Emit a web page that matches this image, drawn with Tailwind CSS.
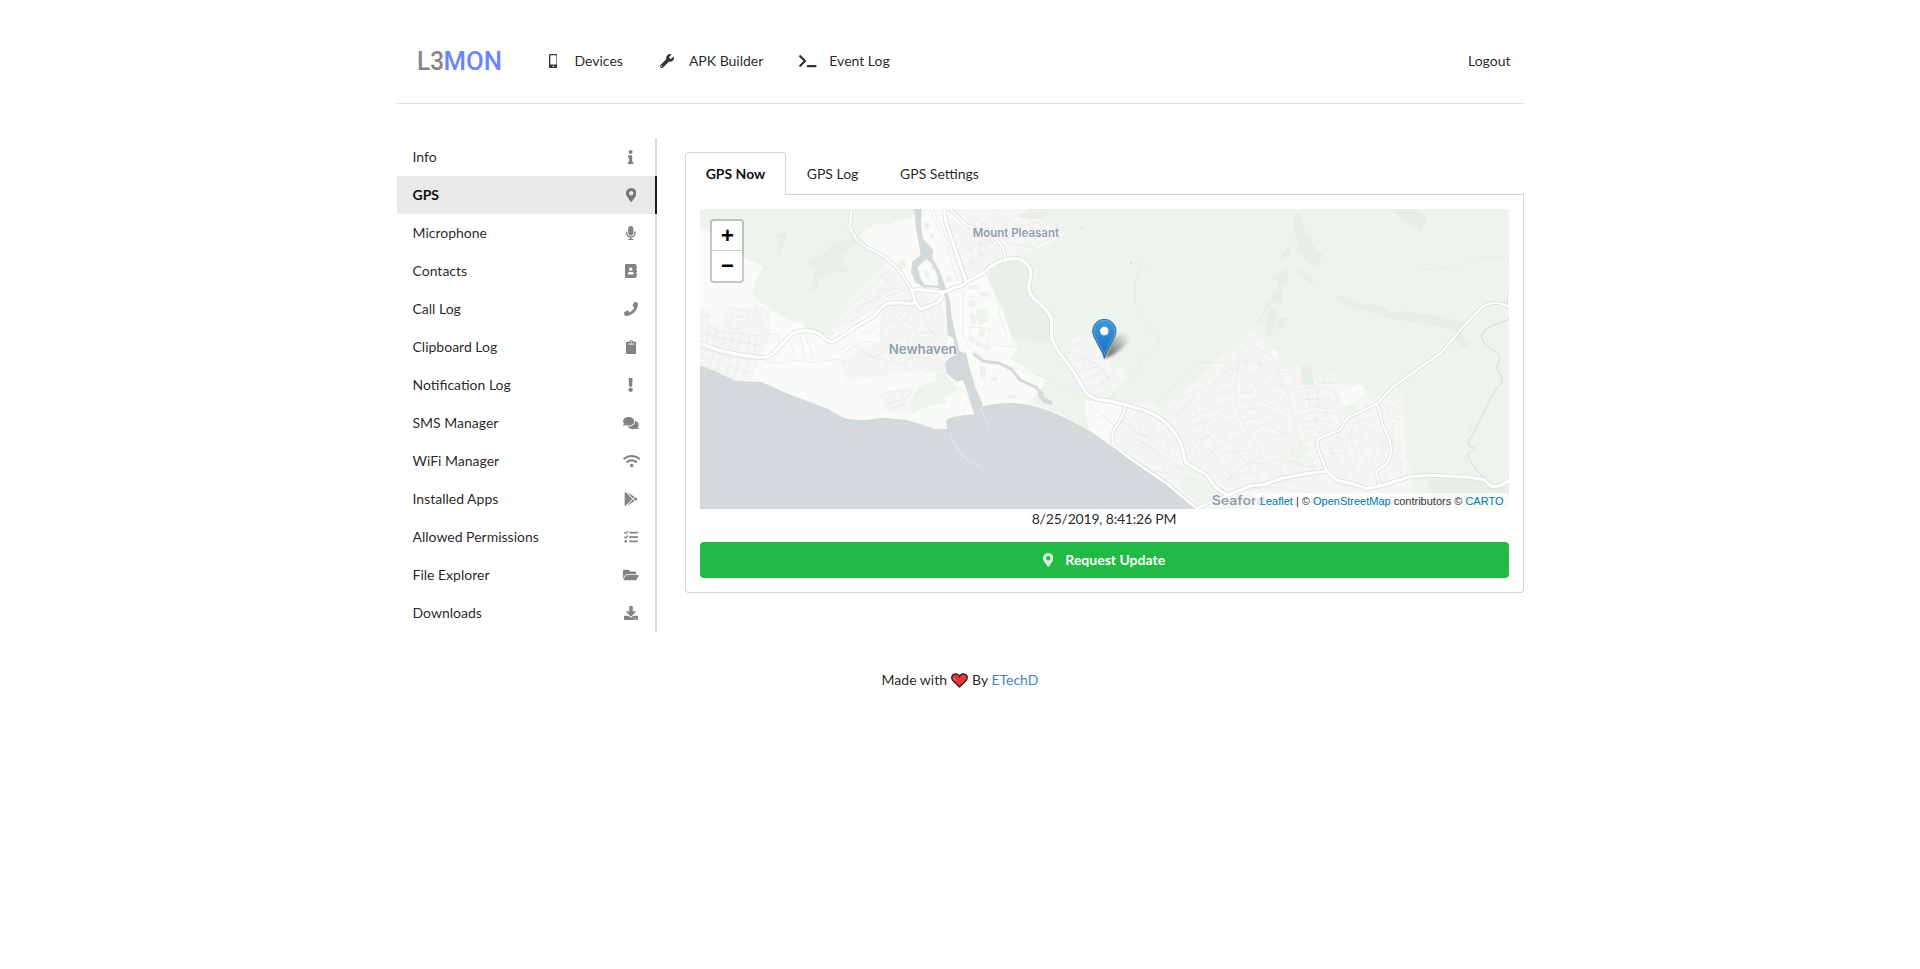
<!DOCTYPE html>
<html lang="en">
<head>
<meta charset="utf-8">
<title>L3MON</title>
<script src="https://cdn.jsdelivr.net/npm/@tailwindcss/browser@4"></script>
</head>
<body class="bg-white font-[Lato,sans-serif] text-sm leading-[18px] text-black/87">
<div class="mx-auto w-[1127px]">
  <header class="mt-[19px] flex h-[85px] items-center border-b border-[#dedede]">
    <svg class="ml-4 h-9 w-[94px]" viewBox="-4 -6 94 36" font-family="Roboto, sans-serif" font-size="25" font-weight="500"><text x="0" y="21" fill="#858585" textLength="27" lengthAdjust="spacingAndGlyphs">L3</text><text x="26.500" y="21" fill="#6c86fa" textLength="58.500" lengthAdjust="spacingAndGlyphs">MON</text></svg>
    <a class="ml-[38px] flex items-center"><span class="flex w-[17px] justify-center"><svg class="h-3.5 fill-[#333]" viewBox="0 0 320 512"><path d="M272 0H48C21.5 0 0 21.5 0 48v416c0 26.500 21.500 48 48 48h224c26.500 0 48-21.500 48-48V48c0-26.500-21.500-48-48-48zM160 480c-17.700 0-32-14.300-32-32s14.300-32 32-32 32 14.300 32 32-14.300 32-32 32zm112-108c0 6.600-5.400 12-12 12H60c-6.600 0-12-5.400-12-12V60c0-6.600 5.400-12 12-12h200c6.600 0 12 5.400 12 12v312z"/></svg></span><span class="ml-[13px]">Devices</span></a>
    <a class="ml-9 flex items-center"><span class="flex w-[17px] justify-center"><svg class="h-3.5 fill-[#333]" viewBox="0 0 512 512"><path d="M507.730 109.100c-2.240-9.030-13.540-12.090-20.120-5.510l-74.360 74.360-67.880-11.310-11.310-67.880 74.360-74.360c6.620-6.620 3.430-17.900-5.660-20.160-47.380-11.740-99.550.91-136.580 37.930-39.640 39.640-50.550 97.100-34.050 147.200L18.740 402.760c-24.990 24.990-24.990 65.510 0 90.500 24.990 24.990 65.510 24.990 90.500 0l213.210-213.210c50.120 16.710 107.470 5.680 147.370-34.220 37.070-37.070 49.700-89.320 37.910-136.730zM64 472c-13.250 0-24-10.750-24-24 0-13.260 10.750-24 24-24s24 10.740 24 24c0 13.250-10.750 24-24 24z"/></svg></span><span class="ml-[13px]">APK Builder</span></a>
    <a class="ml-9 flex items-center"><span class="flex w-[17px] justify-center"><svg class="h-3.5 shrink-0 fill-[#333]" viewBox="0 0 640 512"><path d="M257.981 272.971L63.638 467.314c-9.373 9.373-24.569 9.373-33.941 0L7.029 444.647c-9.357-9.357-9.375-24.522-.04-33.901L161.011 256 6.990 101.255c-9.335-9.379-9.317-24.544.04-33.901l22.667-22.667c9.373-9.373 24.569-9.373 33.941 0L257.981 239.030c9.373 9.372 9.373 24.568 0 33.941zM640 456v-32c0-13.255-10.745-24-24-24H312c-13.255 0-24 10.745-24 24v32c0 13.255 10.745 24 24 24h304c13.255 0 24-10.745 24-24z"/></svg></span><span class="ml-[13px]">Event Log</span></a>
    <a class="mr-[13px] ml-auto">Logout</a>
  </header>

  <div class="flex pt-[34px]">
    <nav class="w-[260px] shrink-0">
      <a class="flex h-[38px] items-center justify-between border-r-2 border-[#dededf] pr-[15px] pl-4">Info<span class="flex w-[17px] justify-center"><svg class="h-3.5 fill-[#838383]" viewBox="0 0 192 512"><path d="M20 424.229h20V279.771H20c-11.046 0-20-8.954-20-20V212c0-11.046 8.954-20 20-20h112c11.046 0 20 8.954 20 20v212.229h20c11.046 0 20 8.954 20 20V492c0 11.046-8.954 20-20 20H20c-11.046 0-20-8.954-20-20v-47.771c0-11.046 8.954-20 20-20zM96 0C56.235 0 24 32.235 24 72s32.235 72 72 72 72-32.235 72-72S135.764 0 96 0z"/></svg></span></a>
      <a class="flex h-[38px] items-center justify-between border-r-2 border-[#1b1c1d] bg-[#e9e9e9] pr-[15px] pl-4 font-bold text-black/95">GPS<span class="flex w-[17px] justify-center"><svg class="h-3.5 fill-[#777777]" viewBox="0 0 384 512"><path d="M172.268 501.670C26.970 291.031 0 269.413 0 192 0 85.961 85.961 0 192 0s192 85.961 192 192c0 77.413-26.970 99.031-172.268 309.670-9.535 13.774-29.930 13.773-39.464 0zM192 272c44.183 0 80-35.817 80-80s-35.817-80-80-80-80 35.817-80 80 35.817 80 80 80z"/></svg></span></a>
      <a class="flex h-[38px] items-center justify-between border-r-2 border-[#dededf] pr-[15px] pl-4">Microphone<span class="flex w-[17px] justify-center"><svg class="h-3.5 fill-[#838383]" viewBox="0 0 352 512"><path d="M176 352c53.020 0 96-42.980 96-96V96c0-53.020-42.980-96-96-96S80 42.980 80 96v160c0 53.020 42.980 96 96 96zm160-160h-16c-8.840 0-16 7.160-16 16v48c0 74.800-64.490 134.820-140.790 127.380C96.710 376.890 48 317.110 48 250.300V208c0-8.840-7.160-16-16-16H16c-8.840 0-16 7.160-16 16v40.160c0 89.640 63.970 169.550 152 181.690V464H96c-8.840 0-16 7.160-16 16v16c0 8.840 7.160 16 16 16h160c8.840 0 16-7.160 16-16v-16c0-8.840-7.160-16-16-16h-56v-33.770C285.710 418.470 352 344.900 352 256v-48c0-8.840-7.160-16-16-16z"/></svg></span></a>
      <a class="flex h-[38px] items-center justify-between border-r-2 border-[#dededf] pr-[15px] pl-4">Contacts<span class="flex w-[17px] justify-center"><svg class="h-3.5 fill-[#838383]" viewBox="0 0 448 512"><path d="M436 160c6.600 0 12-5.400 12-12v-40c0-6.600-5.400-12-12-12h-20V48c0-26.500-21.500-48-48-48H48C21.500 0 0 21.500 0 48v416c0 26.500 21.500 48 48 48h320c26.500 0 48-21.500 48-48v-48h20c6.600 0 12-5.400 12-12v-40c0-6.600-5.400-12-12-12h-20v-64h20c6.600 0 12-5.400 12-12v-40c0-6.600-5.400-12-12-12h-20v-64h20zm-228-32c35.300 0 64 28.700 64 64s-28.700 64-64 64-64-28.700-64-64 28.700-64 64-64zm112 236.800c0 10.600-10 19.200-22.400 19.200H118.400C106 384 96 375.400 96 364.800v-19.200c0-31.800 30.100-57.600 67.200-57.600h5c12.300 5.100 25.700 8 39.800 8s27.600-2.900 39.800-8h5c37.100 0 67.200 25.800 67.200 57.600v19.200z"/></svg></span></a>
      <a class="flex h-[38px] items-center justify-between border-r-2 border-[#dededf] pr-[15px] pl-4">Call Log<span class="flex w-[17px] justify-center"><svg class="h-3.5 fill-[#838383]" viewBox="0 0 512 512"><path d="M493.400 24.600l-104-24c-11.300-2.600-22.900 3.300-27.500 13.900l-48 112c-4.200 9.800-1.400 21.300 6.900 28l60.600 49.600c-36 76.700-98.900 140.500-177.200 177.200l-49.600-60.600c-6.800-8.300-18.200-11.100-28-6.900l-112 48C3.900 366.500-2 378.100.6 389.400l24 104C27.100 504.200 36.700 512 48 512c256.100 0 464-207.500 464-464 0-11.200-7.700-20.900-18.600-23.400z"/></svg></span></a>
      <a class="flex h-[38px] items-center justify-between border-r-2 border-[#dededf] pr-[15px] pl-4">Clipboard Log<span class="flex w-[17px] justify-center"><svg class="h-3.5 fill-[#838383]" viewBox="0 0 384 512"><path d="M384 112v352c0 26.510-21.490 48-48 48H48c-26.510 0-48-21.490-48-48V112c0-26.510 21.490-48 48-48h80c0-35.290 28.710-64 64-64s64 28.710 64 64h80c26.510 0 48 21.490 48 48zM192 40c-13.255 0-24 10.745-24 24s10.745 24 24 24 24-10.745 24-24-10.745-24-24-24m96 114v-20a6 6 0 0 0-6-6H102a6 6 0 0 0-6 6v20a6 6 0 0 0 6 6h180a6 6 0 0 0 6-6z"/></svg></span></a>
      <a class="flex h-[38px] items-center justify-between border-r-2 border-[#dededf] pr-[15px] pl-4">Notification Log<span class="flex w-[17px] justify-center"><svg class="h-3.5 fill-[#838383]" viewBox="0 0 192 512"><path d="M176 432c0 44.112-35.888 80-80 80s-80-35.888-80-80 35.888-80 80-80 80 35.888 80 80zM25.260 25.199l13.600 272C39.499 309.972 50.041 320 62.830 320h66.340c12.789 0 23.331-10.028 23.970-22.801l13.600-272C167.425 11.490 156.496 0 142.770 0H49.230C35.504 0 24.575 11.490 25.260 25.199z"/></svg></span></a>
      <a class="flex h-[38px] items-center justify-between border-r-2 border-[#dededf] pr-[15px] pl-4">SMS Manager<span class="flex w-[17px] justify-center"><svg class="h-3.5 fill-[#838383]" viewBox="0 0 576 512"><path d="M416 192c0-88.400-93.100-160-208-160S0 103.600 0 192c0 34.300 14.100 65.900 38 92-13.400 30.200-35.500 54.200-35.800 54.500-2.200 2.300-2.800 5.700-1.500 8.700S4.800 352 8 352c36.600 0 66.900-12.300 88.700-25 32.200 15.700 70.300 25 111.300 25 114.900 0 208-71.600 208-160zm122 220c23.900-26 38-57.700 38-92 0-66.900-53.500-124.200-129.300-148.100.9 6.600 1.300 13.300 1.300 20.100 0 105.900-107.700 192-240 192-10.800 0-21.300-.8-31.700-1.900C207.800 439.600 281.800 480 368 480c41 0 79.100-9.200 111.300-25 21.800 12.700 52.100 25 88.700 25 3.200 0 6.100-1.900 7.300-4.800 1.300-2.900.7-6.300-1.500-8.700-.3-.3-22.400-24.200-35.800-54.500z"/></svg></span></a>
      <a class="flex h-[38px] items-center justify-between border-r-2 border-[#dededf] pr-[15px] pl-4">WiFi Manager<span class="flex w-[17px] justify-start"><svg class="h-3.5 shrink-0 fill-[#838383]" viewBox="0 0 640 512"><path d="M634.910 154.880C457.740-8.990 182.190-8.930 5.090 154.880c-6.660 6.160-6.790 16.590-.35 22.980l34.240 33.970c6.140 6.100 16.020 6.230 22.400.38 145.920-133.680 371.300-133.710 517.250 0 6.380 5.850 16.260 5.710 22.400-.38l34.240-33.970c6.430-6.390 6.300-16.820-.36-22.980zM320 352c-35.350 0-64 28.650-64 64s28.650 64 64 64 64-28.650 64-64-28.650-64-64-64zm202.670-83.590c-115.260-101.930-290.210-101.820-405.340 0-6.900 6.100-7.120 16.690-.57 23.150l34.440 33.990c6 5.920 15.660 6.320 22.050.8 83.950-72.570 209.740-72.410 293.490 0 6.390 5.520 16.050 5.130 22.050-.8l34.440-33.990c6.560-6.460 6.330-17.060-.56-23.150z"/></svg></span></a>
      <a class="flex h-[38px] items-center justify-between border-r-2 border-[#dededf] pr-[15px] pl-4">Installed Apps<span class="flex w-[17px] justify-center"><svg class="h-3.5 fill-[#838383]" viewBox="0 0 512 512"><path d="M325.300 234.300L104.600 13l280.800 161.200-60.100 60.100zM47 0C34 6.800 25.300 19.200 25.300 35.300v441.300c0 16.100 8.700 28.500 21.700 35.300l256.600-256L47 0zm425.200 225.600l-58.900-34.100-65.700 64.500 65.700 64.500 60.100-34.100c18-14.300 18-46.500-1.200-60.800zM104.600 499l280.800-161.200-60.100-60.100L104.600 499z"/></svg></span></a>
      <a class="flex h-[38px] items-center justify-between border-r-2 border-[#dededf] pr-[15px] pl-4">Allowed Permissions<span class="flex w-[17px] justify-center"><svg class="h-3.5 fill-[#838383]" viewBox="0 0 512 512"><path d="M139.610 35.500a12 12 0 0 0-17 0L58.930 98.810l-22.700-22.120a12 12 0 0 0-17 0L3.530 92.410a12 12 0 0 0 0 17l47.590 47.400a12.780 12.780 0 0 0 17.610 0l15.590-15.620L156.520 69a12.090 12.090 0 0 0 .09-17zm0 159.190a12 12 0 0 0-17 0l-63.680 63.720-22.700-22.100a12 12 0 0 0-17 0L3.530 252a12 12 0 0 0 0 17L51 316.500a12.770 12.770 0 0 0 17.600 0l15.700-15.690 72.200-72.220a12 12 0 0 0 .09-16.900zM64 368c-26.490 0-48.590 21.500-48.590 48S37.530 464 64 464a48 48 0 0 0 0-96zm432 16H208a16 16 0 0 0-16 16v32a16 16 0 0 0 16 16h288a16 16 0 0 0 16-16v-32a16 16 0 0 0-16-16zm0-320H208a16 16 0 0 0-16 16v32a16 16 0 0 0 16 16h288a16 16 0 0 0 16-16V80a16 16 0 0 0-16-16zm0 160H208a16 16 0 0 0-16 16v32a16 16 0 0 0 16 16h288a16 16 0 0 0 16-16v-32a16 16 0 0 0-16-16z"/></svg></span></a>
      <a class="flex h-[38px] items-center justify-between border-r-2 border-[#dededf] pr-[15px] pl-4">File Explorer<span class="flex w-[17px] justify-center"><svg class="h-3.5 fill-[#838383]" viewBox="0 0 576 512"><path d="M572.694 292.093L500.270 416.248A63.997 63.997 0 0 1 444.989 448H45.025c-18.523 0-30.064-20.093-20.731-36.093l72.424-124.155A64 64 0 0 1 152 256h399.964c18.523 0 30.064 20.093 20.730 36.093zM152 224h328v-48c0-26.510-21.490-48-48-48H272l-64-64H48C21.490 64 0 85.490 0 112v278.046l69.077-118.418C86.214 242.250 117.989 224 152 224z"/></svg></span></a>
      <a class="flex h-[38px] items-center justify-between border-r-2 border-[#dededf] pr-[15px] pl-4">Downloads<span class="flex w-[17px] justify-center"><svg class="h-3.5 fill-[#838383]" viewBox="0 0 512 512"><path d="M216 0h80c13.300 0 24 10.700 24 24v168h87.700c17.800 0 26.700 21.500 14.100 34.100L269.700 378.300c-7.500 7.500-19.800 7.500-27.300 0L90.100 226.100c-12.600-12.600-3.700-34.100 14.100-34.100H192V24c0-13.300 10.700-24 24-24zm296 376v112c0 13.300-10.700 24-24 24H24c-13.300 0-24-10.700-24-24V376c0-13.300 10.700-24 24-24h146.700l49 49c20.100 20.100 52.500 20.100 72.600 0l49-49H488c13.300 0 24 10.700 24 24zm-124 88c0-11-9-20-20-20s-20 9-20 20 9 20 20 20 20-9 20-20zm64 0c0-11-9-20-20-20s-20 9-20 20 9 20 20 20 20-9 20-20z"/></svg></span></a>
    </nav>

    <main class="ml-7 w-[839px] pt-3.5">
      <div class="flex h-[43px]">
        <a class="z-10 flex w-[101px] items-center justify-center rounded-t-[4px] border border-b-0 border-[#d4d4d5] bg-white pl-px font-bold text-black/95">GPS Now</a>
        <a class="flex w-[94px] items-center justify-center border-b border-[#d4d4d5] pt-0.5">GPS Log</a>
        <a class="flex w-[120px] items-center justify-center border-b border-[#d4d4d5] pt-0.5">GPS Settings</a>
        <span class="grow border-b border-[#d4d4d5]"></span>
      </div>
      <section class="rounded-b-[4px] border border-t-0 border-[#d4d4d5] p-3.5">
        <div class="relative h-[300px] overflow-hidden bg-[#fafaf8]">
          <svg class="block h-[300px] w-[809px]" viewBox="0 0 2427 900" fill="none" stroke-linejoin="round" stroke-linecap="round">
            <!-- open ground -->
            <g transform="translate(0 -27)">
              <path fill="#edf3ed" d="M0 27H645L635 52 600 62 560 75 530 68 480 105 510 150 560 175 565 190 530 225 470 280 410 340 393 378 402 405 372 412 350 395 312 382 310 368 280 365 215 330 180 305 158 285 165 245 190 198 100 160 40 105 0 80Z"/>
              <path fill="#edf3ed" d="M1005 27H2427V927H2130L1395 637 1300 622 1152 598 1167 690 1100 650 1040 625 990 610 1040 540 1000 520 930 475 955 440 935 410 915 350 890 285 862 222 900 185 960 172 1050 128 1097 100 1040 80 1030 60 955 50Z"/>
              <path fill="#e8efe9" d="M322 185 370 160 400 130 460 115 470 130 430 160 420 185 445 215 385 220 355 240 345 275 335 270 345 215ZM225 103 255 98 258 110 238 168 228 165 240 115ZM950 50 985 27H1055L1030 50 1000 60ZM862 225 905 190 940 180 985 195 992 230 985 275 1030 320 1052 350 1052 415 1010 430 970 412 937 415 915 350Z"/>
              <path fill="#edf3ed" d="M655 560 700 545 760 545 770 575 735 590 740 610 690 615 640 640 625 635 640 585ZM705 520 735 515 745 540 710 550ZM830 325 860 330 865 365 840 375 828 355ZM590 185 615 178 618 200 600 212ZM775 130 810 125 830 165 800 160Z"/>
            </g>
            <g transform="translate(1200 -57)" fill="#e7eee8">
              <path d="M590 70 600 68 608 105 640 165 655 190 668 178 670 190 655 225 640 228 612 205 595 180 592 150 578 120ZM568 163 572 185 545 215 533 215 550 190ZM516 260 540 245 563 228 563 265 547 290 545 345 520 335 485 395 472 395 500 340 535 295 535 278ZM595 243 612 240 638 270 640 285 600 260ZM500 375 520 348 530 370 525 410 510 440 495 430ZM535 385 560 382 563 400 548 418 532 412ZM873 57 945 57 978 82 965 125 925 105ZM700 315 730 318 780 340 850 348 875 370 900 362 960 370 1030 380 1080 395 1095 410 1065 425 1010 408 960 400 870 385 790 360 740 352ZM1062 440 1085 435 1110 455 1095 480ZM985 870 1060 860 1130 865 1180 890 1227 890V957H990Z"/>
            </g>
            <!-- built-up areas -->
            <g transform="translate(0 -27)" fill="#f5f5f3">
              <path d="M0 325 30 330 28 368 62 372 85 318 150 330 165 310 210 330 212 400 180 470 155 540 105 542 0 493ZM395 370 410 340 560 190 590 200 640 270 720 290 745 400 740 520 640 515 440 542 420 490 480 440 540 430 540 320 400 405ZM540 580 640 560 630 640 560 635ZM755 27H985L940 60 1030 55 1035 85 1097 100 960 172 915 160 890 110 830 85ZM1085 440 1150 402 1230 440 1230 600 1170 580Z"/>
              <path d="M745 50 790 80 905 140 910 175 800 235 785 190 750 120Z"/>
            </g>
            <g transform="translate(1200 -57)" fill="#f5f5f3">
              <path d="M185 665 452 420 530 483 540 540 602 526 640 585 650 555 705 548 730 578 850 620 892 595 910 625 918 800 940 850 930 957H300L60 800 30 740 75 650 110 632 165 640ZM0 500 25 520 45 545 60 518 85 560 55 595 20 630 0 630Z"/>
              <path fill="#fafaf8" d="M718 605 780 583 798 605 735 655ZM0 635 75 652 35 740 60 795 0 748ZM515 480H532V505H515Z"/>
              <path fill="#e6eee8" d="M600 530 625 528 640 555 640 585 605 583Z"/>
              <path fill="#edf3ed" d="M570 780 605 758 635 775 600 808 570 800ZM730 652 765 640 768 660 735 680ZM838 745 862 750 862 790 848 790ZM245 870 262 850 320 870 370 912 340 940 290 935 240 895Z"/>
            </g>
            <!-- local streets -->
            <g transform="translate(0 -27)" stroke="#e9e9e8" stroke-width="2.500">
              <path d="M0 345 40 352M0 370 60 392 130 402 185 408M0 395 55 412 125 428 180 435M28 368 20 432M52 385 38 440M75 395 62 448M100 400 85 455M125 402 112 462M150 405 140 465M172 408 160 468M0 445 90 470 160 478M20 445 0 480M45 455 25 503M70 462 50 515M95 468 75 528M120 472 100 540M145 478 125 540M0 468 150 518M85 320 98 350 80 378 120 390M100 325 140 330 145 365 120 385M165 320 185 345 180 375 205 385M190 330 208 350M98 350 135 352"/>
              <path d="M190 482 230 490 290 480 340 488 400 478 440 485M205 402 235 405 238 430 225 445M265 405 285 475M298 395 315 478M312 395 330 440 340 478M400 375 430 330 480 295 540 235 580 200M420 370 470 325 540 290 600 245M440 370 500 335 560 270M470 340 510 300M500 320 545 275 560 240M530 270 600 265M560 290 620 268M540 220 570 255M510 250 545 280M480 285 500 300M580 310 600 350 560 370 540 400 570 430M600 350 640 380 660 420 700 450M640 320 620 360 640 380M665 330 680 380 720 420M620 400 580 420 550 460 520 470 450 430 420 450M450 500 480 460 530 475 600 490 640 470 720 480M460 520 500 490M560 500 600 450M640 470 620 410M690 330 700 370 735 400M700 350 725 330M655 400 700 395 735 430M600 330 640 340M560 330 545 370 500 400M440 455 490 425 540 430M650 540 690 510 740 500M640 515 600 490M580 440 620 460 660 500"/>
              <path d="M540 590 570 575 620 570 600 600 560 610 545 635M560 615 610 600 638 575M550 625 600 618 625 590M565 632 615 612M740 500 735 530 760 560 800 580 810 600 790 635M700 27 745 130 790 250M690 30 735 130 775 245M790 270 788 400 805 440 860 480 950 505 1040 535 1130 585 1230 662M862 225 890 290 900 350 922 410M750 120 775 150 790 200M800 80 830 110 900 140M770 55 800 40M820 50 850 70 900 30M850 70 880 105 930 60 960 40M880 105 920 100 960 80 1030 60M930 60 960 90 1000 150M900 120 940 110 980 90M960 160 940 110M985 75 1015 130M1010 65 1050 115M920 130 1000 140 1060 110"/>
              <path d="M800 290 830 290M800 320 825 318M800 350 828 352M815 290 812 400M800 380 870 385 865 420M805 400 850 440 880 435 930 440 960 440M840 400 820 430M1100 450 1130 430 1160 420M1095 460 1120 455 1180 490M1130 430 1160 470 1210 510M1120 480 1160 480 1150 510M1140 510 1200 500 1230 540M1160 540 1220 510M1180 570 1230 530"/>
            </g>
            <g transform="translate(0 -27)" fill="#efefee">
              <path d="M820 90 850 100 846 112 816 102ZM835 120 865 132 860 145 832 134ZM800 140 822 146 818 158 796 150ZM840 150 855 158 850 172 834 164ZM865 112 882 120 876 132 860 124ZM810 175 830 182 824 196 806 188ZM805 300 828 303 826 318 805 315ZM842 275 868 280 866 292 840 288ZM810 340 828 345 826 375 810 370ZM840 385 855 388 852 410 838 408ZM806 405 822 412 818 428 804 420ZM830 420 845 428 842 440 826 434ZM805 252 838 256 836 270 805 266ZM850 430 875 438 870 452 850 448ZM838 495 858 500 855 540 840 530ZM875 530H893V543H875ZM925 583 950 588 945 598 922 593ZM672 65 690 72 686 90 672 85ZM690 95 706 105 700 118 688 110ZM695 190 705 195 700 215 690 205ZM670 210 685 215 688 235 675 230ZM740 228 758 232 752 246 738 242Z"/>
            </g>
            <g transform="translate(1200 -57)" stroke="#e9e9e8" stroke-width="2.500">
              <path d="M110 205 122 240 142 240M122 240 105 275 105 340 135 400 160 430 180 445 160 480 125 500 115 540 20 630M160 650 200 610 295 517 345 517 395 515M0 680 60 715 150 770 230 825 320 865M948 235 1000 240 1030 233 1055 238 1110 213 1160 200 1227 206"/>
              <path d="M215 660 240 620 300 600 360 565 395 520 445 460M225 680 270 640 340 620 400 590M240 700 300 670 385 640M250 715 330 690 375 660M205 690 260 640 290 610M275 640 290 670 320 700 310 730 350 760M300 600 320 620M340 580 375 610 405 600M330 560 350 580M360 545 400 560M380 530 420 545M445 440 470 475 520 500 535 550 560 600 575 660 590 720 600 760M420 490 410 560 405 620 420 680 450 740 480 790 490 820M400 530 440 510 500 530 530 560M440 510 440 540 460 560M470 500 480 530 500 570 560 600M445 560 470 580 455 605 410 612M460 560 475 545M520 550 550 545 580 550 590 575 525 590M420 640 470 625 520 650 560 620M440 660 490 650 530 680 575 660M430 690 480 680 520 710 550 690M450 720 500 700 560 740M470 770 520 740 590 720M480 790 540 770 560 740M490 820 560 800 620 830M270 820 300 760 360 710 420 680M255 800 290 750 330 740M300 830 340 780 400 750 440 735M320 850 370 790 440 780M330 760 370 790 430 860M360 710 390 760 440 820 480 880M300 760 350 800 400 870M420 830 480 800M380 870 440 820 490 820 520 860M540 860 545 810 620 830 680 825M560 810 600 820 610 860M640 880 635 820 660 770M360 880 430 850 480 850"/>
              <path d="M650 560 655 580 715 580 712 555M670 555V580M690 555V580M590 600 640 590 700 600 715 640 690 660 640 650 600 660M620 600 630 650M650 592 655 650M600 630 690 625M580 680 640 665 715 670 725 700M600 700 650 690 700 700M610 720 640 710 660 730M600 760 650 740M640 665 650 700 640 720M680 665 690 705M800 690 760 700 750 750 770 790 760 840 720 860M770 700 790 740 775 770 800 810 780 850M740 720 750 740M700 740 740 750 735 790 690 790M680 760 700 790 720 830M800 720 830 730 850 760M800 750 825 780 815 810 850 830M860 640 870 680 900 690M850 660 880 650 900 640M880 700 880 760 910 780M875 790 900 800 905 850M850 850 870 890M700 880 740 890M540 880 580 870 600 900 640 910M440 900 520 890 600 905M110 670 90 700 110 730 150 740 160 710 140 690 120 700 125 720M140 660 190 690M170 680 160 720 200 750 210 800M60 690 140 740 220 800M80 780 130 760 180 800 200 850M150 840 200 850 240 830M230 825 260 860M100 790 160 750M0 590 40 545M0 545 30 570M1105 710 1117 712 1112 722 1103 718Z"/>
            </g>
            <!-- water -->
            <g transform="translate(0 -27)" fill="#d4dadc">
              <path d="M0 495 50 515 105 542 185 546 260 580 380 625C410 640 425 655 450 658L490 661 550 653 620 660 705 686 742 687 738 665C740 652 770 648 822 643L840 622C880 608 930 604 990 615C1060 632 1130 668 1180 700L1300 785 1400 855 1498 927H0Z"/>
              <path fill-rule="evenodd" d="M642 27H665L663 70 668 115 700 150 697 175 720 215 738 265 750 305 755 350 770 420 780 455 798 458 805 490 825 560 848 612 840 628 822 643 800 570 788 540 770 545 740 520 735 490 750 472 768 465 760 415 743 405 740 350 735 280 715 264 670 262 645 245 633 215 637 185 662 165 655 120 647 80ZM680 178 665 188 653 202 660 230 672 254 715 257 712 225 695 190Z"/>
              <path stroke="#d4dadc" stroke-width="9" fill="none" d="M822 462 850 484 900 490 935 508 960 540 1010 562 1025 590"/>
              <path d="M1015 568 1028 575 1032 592 1058 605 1055 615 1030 608 1015 590ZM1145 82H1149V87H1145ZM1290 187H1295V192H1290Z"/>
            </g>
            <g transform="translate(1200 -57)" stroke="#d4dadc" stroke-width="3"><path d="M1227 388C1190 400 1165 410 1150 425C1135 445 1155 462 1175 478C1205 495 1202 510 1192 525C1185 545 1210 550 1206 572C1200 590 1180 605 1165 640L1120 730C1095 765 1105 768 1122 772C1120 785 1100 782 1106 805L1130 840 1170 885"/></g>
            <g transform="translate(0 -27)" stroke="#f2e6e4" stroke-width="4" stroke-linecap="butt" stroke-dasharray="5 3"><path d="M748 697C765 740 795 790 845 800M842 625 870 685M672 678 704 686"/></g>
            <!-- main roads: casing, then surface -->
            <defs>
              <g id="trunk">
                <path d="M0 430 60 452 130 466 180 473Q205 474 220 460L265 412Q285 390 320 392 345 394 360 404L380 420Q395 430 410 420L460 385 520 350 545 322Q560 308 590 308L640 311M636 272Q640 268 660 269L720 276Q735 278 765 262 790 260 800 245L855 216Q880 185 925 178 965 165 990 205 995 225 986 260 990 290 1010 303 1055 340 1055 365L1055 415Q1070 450 1095 480 1120 510 1150 565 1165 592 1190 597L1240 605 1300 621Q1370 640 1400 670 1440 710 1450 755L1456 788 1520 825 1545 860 1580 885M636 272 645 305 662 328 705 312Q728 300 728 280M733 27 737 65 797 240"/>
                <path d="M1580 887 1650 858 1690 854 1750 834 1810 823 1880 813 1910 840 1960 852 2000 866 2040 858 2130 830 2200 826 2300 831 2350 838 2375 860 2400 857 2427 843"/>
              </g>
              <g id="minor">
                <path d="M455 27 448 80 470 120 500 142 555 170 597 210 638 275M752 30 800 75 880 110Q915 140 917 175"/>
                <path d="M1275 622Q1270 650 1242 688 1230 715 1242 737L1290 775 1400 850 1490 925 1580 887M2427 320Q2385 297 2345 322L2285 385 2225 457 2080 560 2030 612 1940 655 1920 690 1865 712Q1848 720 1852 740L1880 813M2030 612Q2040 630 2045 665L2070 725Q2078 770 2060 790L2028 815 2040 858M2427 290V318"/>
              </g>
            </defs>
            <g transform="translate(0 -27)">
              <use href="#minor" stroke="#dcdcdc" stroke-width="11"/>
              <use href="#trunk" stroke="#dcdcdc" stroke-width="14"/>
              <use href="#minor" stroke="#fff" stroke-width="6.500"/>
              <use href="#trunk" stroke="#fff" stroke-width="9.500"/>
            </g>
            <!-- place names -->
            <g transform="translate(0 -27)" fill="#919fae" stroke="#fafaf8" stroke-opacity=".7" stroke-width="4" paint-order="stroke" font-family="Inter, sans-serif" font-weight="600">
              <text x="818" y="111" font-size="34" textLength="259" lengthAdjust="spacingAndGlyphs">Mount Pleasant</text>
              <text x="566" y="461" font-size="39" textLength="204" lengthAdjust="spacingAndGlyphs">Newhaven</text>
              <text x="1535" y="916" font-size="38" textLength="160" lengthAdjust="spacingAndGlyphs">Seaford</text>
            </g>
            <!-- marker -->
            <defs>
              <linearGradient id="pin" x1="0" y1="0" x2="0" y2="1"><stop offset="0" stop-color="#419ad6"/><stop offset="1" stop-color="#126fc6"/></linearGradient>
              <linearGradient id="shade" x1="0" y1="1" x2="1" y2="0"><stop offset="0" stop-color="#000" stop-opacity=".65"/><stop offset=".5" stop-color="#000" stop-opacity=".3"/><stop offset="1" stop-color="#000" stop-opacity="0"/></linearGradient>
              <filter id="soft" x="-30%" y="-30%" width="160%" height="160%"><feGaussianBlur stdDeviation="5"/></filter>
            </defs>
            <path fill="url(#shade)" filter="url(#soft)" d="M1213 449 1231 404C1245 372 1282 366 1284 386 1286 410 1248 435 1213 449Z"/>
            <path fill="url(#pin)" stroke="#2e6c97" stroke-width="3" d="M1213 447C1206 420 1178 388 1178 366A35 35 0 0 1 1248 366C1248 388 1220 420 1213 447Z"/>
            <path stroke="#fff" stroke-opacity=".22" stroke-width="3" d="M1213 434C1205 413 1181 385 1181 366A32 32 0 0 1 1245 366C1245 385 1221 413 1213 434Z"/>
            <circle cx="1213" cy="366" r="13.500" fill="#fff" stroke="#2e6c97" stroke-width="2" stroke-opacity=".6"/>
          </svg>
          <div class="absolute top-2.5 left-2.5 flex w-[34px] flex-col overflow-hidden rounded-[4px] border-2 border-black/20 bg-white bg-clip-padding text-center font-['Liberation_Sans',sans-serif] text-[22px] font-bold text-black">
            <a class="h-[30px] border-b border-[#ccc] pl-0.5 leading-[30px]">+</a>
            <a class="h-[30px] pl-0.5 leading-[29px]">−</a>
          </div>
          <div class="absolute right-0 bottom-0 h-4 bg-white/70 px-[5px] font-['Liberation_Sans',sans-serif] text-[11px] leading-4 whitespace-nowrap text-[#333]"><a class="text-[#0078a8]">Leaflet</a> | © <a class="text-[#0078a8]">OpenStreetMap</a> contributors © <a class="text-[#0078a8]">CARTO</a></div>
        </div>
        <p class="h-[33px] pt-px text-center tracking-[-0.2px]">8/25/2019, 8:41:26 PM</p>
        <button class="flex h-9 w-full items-center justify-center rounded-[4px] bg-[#21ba45] font-bold text-white"><svg class="mr-3 h-3.5 fill-white/80" viewBox="0 0 384 512"><path d="M172.268 501.670C26.970 291.031 0 269.413 0 192 0 85.961 85.961 0 192 0s192 85.961 192 192c0 77.413-26.970 99.031-172.268 309.670-9.535 13.774-29.930 13.773-39.464 0zM192 272c44.183 0 80-35.817 80-80s-35.817-80-80-80-80 35.817-80 80 35.817 80 80 80z"/></svg>Request Update</button>
      </section>
    </main>
  </div>

  <footer class="mt-[39px] flex items-center justify-center">Made with <svg class="mx-1 h-[15px] w-[17px]" viewBox="0 0 17 15"><path fill="#e8343f" stroke="#33181b" stroke-width="1.300" d="M8.500 14 1.700 7.300C.2 5.600.5 2.700 2.300 1.500 4.300.2 7.200.8 8.500 3.400 9.800.8 12.700.2 14.700 1.500 16.500 2.700 16.800 5.600 15.300 7.300Z"/><path fill="none" stroke="#f58b90" stroke-linecap="round" d="M3 5.200Q3.100 6.500 4.200 7.500"/></svg> By&nbsp;<a class="text-[#4183c4]">ETechD</a></footer>
</div>
</body>
</html>
